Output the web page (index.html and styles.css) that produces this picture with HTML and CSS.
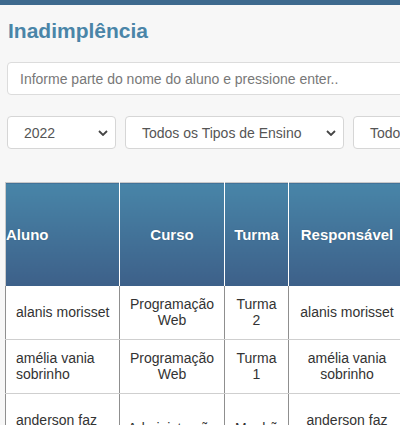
FILE: index.html
```html
<!DOCTYPE html>
<html lang="pt-BR">
<head>
<meta charset="utf-8">
<title>Inadimplência</title>
<link rel="stylesheet" href="styles.css">
</head>
<body>
<div class="topbar"></div>
<main class="page">
  <h1 class="title">Inadimplência</h1>
  <div class="search">Informe parte do nome do aluno e pressione enter..</div>
  <div class="filters">
    <div class="select sel-year"><span>2022</span><svg class="chev" viewBox="0 0 10 6" width="10" height="6"><path d="M1 1l4 4 4-4" fill="none" stroke="#444" stroke-width="1.8"/></svg></div>
    <div class="select sel-tipo"><span>Todos os Tipos de Ensino</span><svg class="chev" viewBox="0 0 10 6" width="10" height="6"><path d="M1 1l4 4 4-4" fill="none" stroke="#444" stroke-width="1.8"/></svg></div>
    <div class="select sel-other"><span>Todos os Cursos</span></div>
  </div>
  <table class="grid">
    <thead>
      <tr>
        <th class="c1 left">Aluno</th>
        <th class="c2">Curso</th>
        <th class="c3">Turma</th>
        <th class="c4">Responsável</th>
        <th class="c5">Telefone</th>
      </tr>
    </thead>
    <tbody>
      <tr>
        <td class="left">alanis morisset</td>
        <td>Programação<br>Web</td>
        <td>Turma<br>2</td>
        <td>alanis morisset</td>
        <td>(11) 99999-0000</td>
      </tr>
      <tr>
        <td class="left">amélia vania<br>sobrinho</td>
        <td>Programação<br>Web</td>
        <td>Turma<br>1</td>
        <td>amélia vania<br>sobrinho</td>
        <td>(11) 98888-1111</td>
      </tr>
      <tr>
        <td class="left">anderson faz<br>de souza</td>
        <td>Administração</td>
        <td>Manhã</td>
        <td>anderson faz<br>de souza</td>
        <td>(11) 97777-2222<br>(11) 3333-4444<br>(11) 96666-5555</td>
      </tr>
    </tbody>
  </table>
</main>
</body>
</html>
```
FILE: styles.css
```css
html, body {
  margin: 0;
  padding: 0;
  background: #f7f7f7;
  overflow: hidden;
  font-family: "Liberation Sans", Arial, sans-serif;
}
.topbar {
  height: 5px;
  background: #3e6a8e;
}
.page {
  padding: 0 0 0 7px;
  width: 700px;
}
.title {
  margin: 14px 0 0 1px;
  font-size: 21px;
  line-height: 24px;
  font-weight: bold;
  color: #4a85a8;
}
.search {
  margin-top: 19px;
  height: 31px;
  width: 500px;
  box-sizing: content-box;
  background: #fff;
  border: 1px solid #dcdcdc;
  border-radius: 4px;
  padding: 0 0 0 12px;
  display: flex;
  align-items: center;
  font-size: 14px;
  color: #787878;
}
.filters {
  margin-top: 21px;
  display: flex;
  gap: 9px;
}
.select {
  height: 31px;
  background: #fff;
  border: 1px solid #d6d6d6;
  border-radius: 4px;
  display: flex;
  align-items: center;
  justify-content: space-between;
  font-size: 14px;
  color: #555;
  box-sizing: content-box;
}
.sel-year { width: 107px; }
.sel-year span { margin-left: 16px; }
.sel-tipo { width: 217px; }
.sel-tipo span { margin-left: 16px; }
.sel-other { width: 200px; justify-content: flex-start; }
.sel-other span { margin-left: 16px; }
.chev { margin-right: 7px; }
.grid {
  margin: 33px 0 0 -2px;
  border-collapse: collapse;
  table-layout: fixed;
  width: 622px;
  background: #fff;
  border-top: 1px solid #c9c9c9;
}
.grid th {
  height: 103px;
  padding: 0;
  background: linear-gradient(#4885a8, #3d6089);
  color: #fff;
  font-size: 15px;
  font-weight: bold;
  text-align: center;
  border-left: 1px solid #fff;
  border-right: 1px solid #fff;
  text-shadow: 0 0 1px rgba(0,0,0,0.3);
}
.grid th.left { text-align: left; border-left: 1px solid #c9c9c9; }
.c1 { width: 113px; }
.c2 { width: 104px; }
.c3 { width: 63px; }
.c4 { width: 116px; }
.c5 { width: 220px; }
.grid td {
  padding: 10px 4px 11px;
  font-size: 14px;
  line-height: 16px;
  color: #333;
  text-align: center;
  vertical-align: middle;
  border: 1px solid #8f8f8f;
  border-top-color: #cfcfcf;
  border-bottom: 1px solid #cfcfcf;
}
.grid td.left { text-align: left; padding-left: 10px; padding-right: 2px; }
.grid tbody tr:first-child td { border-top: none; }
```
